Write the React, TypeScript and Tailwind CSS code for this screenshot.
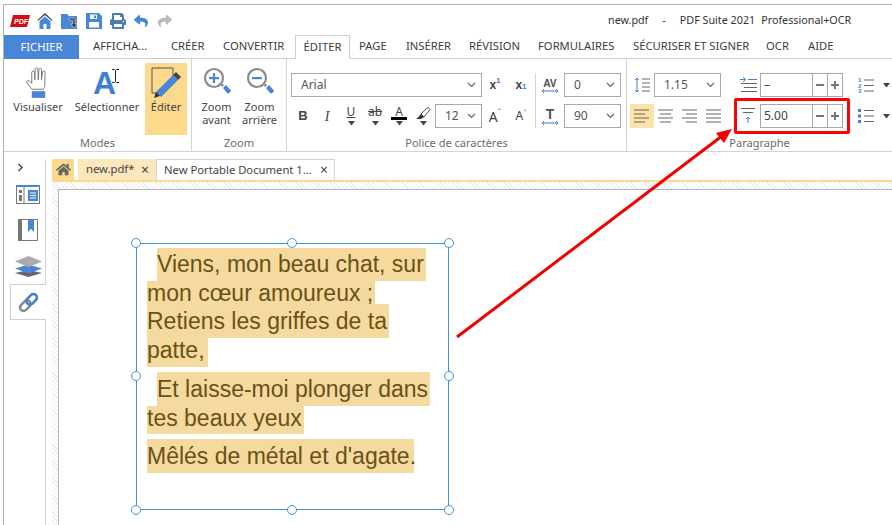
import React from 'react';
import { FaHome, FaPrint, FaReply, FaShare } from 'react-icons/fa';

const Chevron = () => (
  <svg width="9" height="6" viewBox="0 0 9 6" className="shrink-0">
    <path d="M1 1l3.5 3.5L8 1" fill="none" stroke="#666" strokeWidth="1.2" />
  </svg>
);

function Select({ value, className }: { value: string; className: string }) {
  return (
    <div className={`flex h-[24px] items-center justify-between border border-[#a9a9a9] bg-white pl-[9px] pr-[5px] text-[12px] text-[#555] ${className}`}>
      <span>{value}</span>
      <Chevron />
    </div>
  );
}

function Spinner({ value }: { value: string }) {
  return (
    <div className="flex h-[24px] w-[83px] items-center border border-[#a9a9a9] bg-white text-[12px] text-[#444]">
      <span className="flex-1 pl-[3px]">{value}</span>
      <span className="flex h-full w-[15px] items-center justify-center border-l border-[#a9a9a9]">
        <span className="h-[2px] w-[8px] bg-[#777]" />
      </span>
      <span className="relative flex h-full w-[15px] items-center justify-center border-l border-[#a9a9a9]">
        <span className="h-[2px] w-[8px] bg-[#777]" />
        <span className="absolute h-[8px] w-[2px] bg-[#777]" />
      </span>
    </div>
  );
}

const Lines = ({ kind }: { kind: 'left' | 'center' | 'right' | 'justify' }) => {
  const rows = [16, 10, 16, 10];
  return (
    <svg width="16" height="14" viewBox="0 0 16 14">
      {rows.map((w, i) => {
        const width = kind === 'justify' ? 15 : i % 2 ? w + 1 : 15;
        const x = kind === 'left' || kind === 'justify' ? 0 : kind === 'center' ? (15 - width) / 2 : 15 - width;
        return <rect key={i} x={x} y={i * 4 + 0.5} width={width} height="1" fill="#666" />;
      })}
    </svg>
  );
};

const Hand = () => (
  <svg width="24" height="34" viewBox="0 0 25 35">
    <path
      d="M6 24 1.2 17.5c-1.2-2 1-3.6 2.7-2L6 18V6.5c0-2 2.6-2 2.8 0L9.2 14 9.5 3.2c.1-2 2.8-2 2.9 0L12.8 14l.6-10.5c.2-2 2.8-1.8 2.8.2L16 14.500l1.300-8.500c.4-1.800 2.800-1.400 2.600.5L19.500 20c-.3 2-.8 3-1.500 4Z"
      fill="#fff"
      stroke="#777"
      strokeWidth="1"
    />
    <rect x="6" y="26" width="14" height="7" fill="#4a86d8" />
  </svg>
);

const ZoomIcon = ({ plus }: { plus?: boolean }) => (
  <svg width="28" height="30" viewBox="0 0 28 30">
    <circle cx="11" cy="11" r="9" fill="#fff" stroke="#8c8c8c" strokeWidth="2.2" />
    <rect x="6" y="10" width="10" height="2.200" fill="#4a86d8" />
    {plus && <rect x="9.900" y="6" width="2.200" height="10" fill="#4a86d8" />}
    <path d="M18 18l2-1 1 1-2 2Z" fill="#777" />
    <path d="M20 21l3-3 5 5.500c.3 1-2.500 3.500-3.500 3Z" fill="#4a86d8" />
  </svg>
);

const EditIcon = () => (
  <svg width="30" height="33" viewBox="0 0 30 33">
    <path d="M7 26H1V1h21v10" fill="none" stroke="#555" strokeWidth="1" />
    <path d="M6 27 23 10l5 5-17 17Z" fill="#4a86d8" transform="translate(-1 -2)" />
    <path d="M22 8l3-3 5 5-3 3Z" fill="#444" />
    <path d="M5 25l-2 6 6-2Z" fill="#333" />
  </svg>
);

const SmallArrow = () => (
  <svg width="7" height="5" viewBox="0 0 7 5">
    <path d="M0 0h7L3.500 4.500Z" fill="#444" />
  </svg>
);

const Tool = ({ children, className }: { children: React.ReactNode; className: string }) => (
  <div className={`flex h-[24px] shrink-0 items-center justify-center ${className}`}>{children}</div>
);

function Tabs() {
  const tabs = [
    ['AFFICHA...', 'w-[78px]'],
    ['CRÉER', 'w-[52px]'],
    ['CONVERTIR', 'w-[81px]'],
  ];
  const rest = [
    ['PAGE', 'w-[47px]'],
    ['INSÉRER', 'w-[63px]'],
    ['RÉVISION', 'w-[69px]'],
    ['FORMULAIRES', 'w-[95px]'],
    ['SÉCURISER ET SIGNER', 'w-[133px]'],
    ['OCR', 'w-[42px]'],
    ['AIDE', 'w-[50px]'],
  ];
  return (
    <div className="flex h-[24px] items-stretch border-b border-[#cfcfcf] text-[11.25px] text-[#3c3c3c]">
      <div className="mb-[-1px] flex w-[75px] items-center justify-center bg-[#4a86d8] text-white">FICHIER</div>
      <div className="w-[5px]" />
      {tabs.map(([t, w]) => (
        <div key={t} className={`flex items-center whitespace-nowrap pl-[9px] ${w}`}>{t}</div>
      ))}
      <div className="mb-[-1px] flex w-[55px] items-center justify-center border border-b-0 border-[#cfcfcf] bg-white">ÉDITER</div>
      {rest.map(([t, w]) => (
        <div key={t} className={`flex items-center whitespace-nowrap pl-[9px] ${w}`}>{t}</div>
      ))}
    </div>
  );
}

const GroupLabel = ({ children }: { children: React.ReactNode }) => (
  <div className="text-center text-[11px] leading-[16px] text-[#6b6b6b]">{children}</div>
);

function Modes() {
  return (
    <div className="flex w-[188px] shrink-0 flex-col border-r border-[#d4d4d4]">
      <div className="flex h-[77px] pl-[3px] pt-[4px] text-[11px] leading-[13px] text-[#444]">
        <div className="flex w-[62px] flex-col items-center pt-[3px]">
          <Hand />
          <span>Visualiser</span>
        </div>
        <div className="flex w-[76px] flex-col items-center pt-[3px]">
          <div className="relative flex h-[34px] w-[50px] items-center">
            <span className="pl-[11px] font-['Liberation_Sans'] text-[32px] font-bold leading-none text-[#3f7fd4]">A</span>
            <svg width="7" height="14" viewBox="0 0 7 14" className="absolute left-[30px] top-[3px]">
              <path d="M0 .5h2.500L3.500 1.500 4.500.5H7M3.500 1.500v11M0 13.500h2.500l1-1 1 1H7" fill="none" stroke="#222" />
            </svg>
          </div>
          <span>Sélectionner</span>
        </div>
        <div className="flex h-[72px] w-[42px] flex-col items-center bg-[#fdd98c] pt-[3px]">
          <div className="flex h-[34px] items-center"><EditIcon /></div>
          <span>Éditer</span>
        </div>
      </div>
      <GroupLabel>Modes</GroupLabel>
    </div>
  );
}

function ZoomGroup() {
  return (
    <div className="flex w-[95px] shrink-0 flex-col border-r border-[#d4d4d4]">
      <div className="flex h-[77px] pl-[3px] pt-[8px] text-center text-[11px] leading-[13px] text-[#444]">
        <div className="flex w-[43px] flex-col items-center">
          <ZoomIcon plus />
          <span className="mt-[3px]">Zoom</span>
          <span>avant</span>
        </div>
        <div className="flex w-[43px] flex-col items-center">
          <ZoomIcon />
          <span className="mt-[3px]">Zoom</span>
          <span>arrière</span>
        </div>
      </div>
      <GroupLabel>Zoom</GroupLabel>
    </div>
  );
}

function FontGroup() {
  return (
    <div className="flex w-[340px] shrink-0 flex-col border-r border-[#d4d4d4]">
      <div className="flex h-[77px] pl-[4px] pt-[14px]">
        <div className="flex h-[55px] w-[245px] flex-col gap-[7px] border-r border-[#d4d4d4] text-[#444]">
          <div className="flex">
            <Select value="Arial" className="w-[191px]" />
            <Tool className="w-[26px] font-['Liberation_Sans'] text-[12px] font-bold">x<sup className="text-[8px] text-[#3f7fd4]">1</sup></Tool>
            <Tool className="w-[26px] font-['Liberation_Sans'] text-[12px] font-bold">x<sub className="text-[8px] text-[#3f7fd4]">1</sub></Tool>
          </div>
          <div className="flex">
            <Tool className="w-[24px] font-['Liberation_Sans'] text-[13px] font-bold">B</Tool>
            <Tool className="w-[24px] font-['Liberation_Serif'] text-[14px] italic">I</Tool>
            <Tool className="w-[24px] flex-col">
              <span className="text-[12px] leading-[12px] underline">U</span>
              <span className="mt-[3px] flex"><SmallArrow /></span>
            </Tool>
            <Tool className="w-[24px] flex-col">
              <span className="text-[12px] leading-[12px] line-through">ab</span>
              <span className="mt-[3px] flex"><SmallArrow /></span>
            </Tool>
            <Tool className="w-[24px] flex-col">
              <span className="text-[12px] leading-[11px]">A</span>
              <span className="h-[3px] w-[16px] bg-black" />
              <span className="mt-[1px] flex"><SmallArrow /></span>
            </Tool>
            <Tool className="w-[24px] flex-col">
              <svg width="16" height="13" viewBox="0 0 16 13">
                <path d="M6 7l6-6c1-1 3 0 3 1.500L9 10Z" fill="#fff" stroke="#555" />
                <path d="M6 7l3 3-3 2-5 0c2-1 3-3 5-5Z" fill="#333" />
              </svg>
              <span className="mt-[1px] flex"><SmallArrow /></span>
            </Tool>
            <Select value="12" className="w-[47px]" />
            <Tool className="w-[26px] text-[14px]">A<span className="mb-[6px] text-[8px] text-[#3f7fd4]">ˆ</span></Tool>
            <Tool className="w-[26px] text-[12px]">A<span className="mb-[4px] text-[8px] text-[#3f7fd4]">ˇ</span></Tool>
          </div>
        </div>
        <div className="flex flex-col gap-[7px]">
          <div className="flex">
            <Tool className="w-[28px] flex-col text-[10px] font-bold leading-[11px] text-[#555]">
              AV
              <svg width="16" height="4" viewBox="0 0 16 4"><path d="M0 2h16M2 0 0 2l2 2M14 0l2 2-2 2" stroke="#3f7fd4" fill="none" /></svg>
            </Tool>
            <Select value="0" className="w-[57px]" />
          </div>
          <div className="flex">
            <Tool className="w-[28px] flex-col font-['Liberation_Sans'] text-[14px] font-bold leading-[14px] text-[#555]">
              T
              <svg width="16" height="4" viewBox="0 0 16 4"><path d="M0 2h16M2 0 0 2l2 2M14 0l2 2-2 2" stroke="#3f7fd4" fill="none" /></svg>
            </Tool>
            <Select value="90" className="w-[57px]" />
          </div>
        </div>
      </div>
      <GroupLabel>Police de caractères</GroupLabel>
    </div>
  );
}

function ParagraphGroup() {
  return (
    <div className="flex flex-1 flex-col">
      <div className="flex h-[77px] flex-col gap-[7px] pl-[3px] pt-[14px]">
        <div className="flex items-center">
          <Tool className="w-[24px]">
            <svg width="16" height="16" viewBox="0 0 16 16">
              <path d="M3 1v14M1 3l2-2 2 2M1 13l2 2 2-2" stroke="#3f7fd4" fill="none" />
              <path d="M8 2h8M8 6h8M8 10h8M8 14h8" stroke="#666" />
            </svg>
          </Tool>
          <Select value="1.15" className="w-[67px]" />
          <Tool className="ml-[15px] w-[24px] justify-start pl-[4px]">
            <svg width="17" height="18" viewBox="0 0 17 18">
              <path d="M0 3.500h5M3 1l2.500 2.500L3 6" stroke="#3f7fd4" fill="none" />
              <path d="M8 3.500h9" stroke="#3f7fd4" />
              <path d="M1 7.500h16M4 11.500h13M1 15.500h16" stroke="#666" />
            </svg>
          </Tool>
          <Spinner value="–" />
          <Tool className="ml-[15px] w-[16px]">
            <svg width="16" height="16" viewBox="0 0 16 16">
              <text x="0" y="5" fontSize="6" fontWeight="700" fill="#3f7fd4" fontFamily="Liberation Sans">1</text>
              <text x="0" y="10.500" fontSize="6" fontWeight="700" fill="#3f7fd4" fontFamily="Liberation Sans">2</text>
              <text x="0" y="16" fontSize="6" fontWeight="700" fill="#3f7fd4" fontFamily="Liberation Sans">3</text>
              <path d="M6 3h10M6 8.500h10M6 14h10" stroke="#666" />
            </svg>
          </Tool>
          <span className="ml-[9px] flex"><SmallArrow /></span>
        </div>
        <div className="flex items-center">
          <Tool className="w-[24px] bg-[#fde3a7]"><Lines kind="left" /></Tool>
          <Tool className="w-[24px]"><Lines kind="center" /></Tool>
          <Tool className="w-[24px]"><Lines kind="right" /></Tool>
          <Tool className="w-[24px]"><Lines kind="justify" /></Tool>
          <Tool className="ml-[10px] w-[24px] justify-start pl-[5px]">
            <svg width="14" height="16" viewBox="0 0 14 16">
              <path d="M0 .5h14M2 4.500h10" stroke="#666" />
              <path d="M7 15V9M5 11l2-2 2 2" stroke="#3f7fd4" fill="none" />
            </svg>
          </Tool>
          <div className="relative">
            <Spinner value="5.00" />
            <div className="absolute -bottom-[6px] -left-[26px] -right-[7px] -top-[6px] rounded-[2px] border-[3px] border-[#ff0000]" />
          </div>
          <Tool className="ml-[15px] w-[16px]">
            <svg width="16" height="14" viewBox="0 0 16 14">
              <path d="M0 0h3v3H0zM0 5.500h3v3H0zM0 11h3v3H0z" fill="#3f7fd4" />
              <path d="M6 1.500h10M6 7h10M6 12.500h10" stroke="#666" />
            </svg>
          </Tool>
          <span className="ml-[9px] flex"><SmallArrow /></span>
        </div>
      </div>
      <GroupLabel>Paragraphe</GroupLabel>
    </div>
  );
}

const PanelIcon = () => (
  <svg width="24" height="19" viewBox="0 0 24 19">
    <rect x=".5" y="1" width="23" height="17.500" fill="#fff" stroke="#777" />
    <rect x="0" y="0" width="24" height="2" fill="#4a86d8" />
    <path d="M8 2v16" stroke="#777" />
    <rect x="3" y="5" width="3" height="3" fill="#777" />
    <rect x="3" y="10" width="3" height="6" fill="#777" />
    <rect x="12" y="5" width="10" height="11" fill="#4a86d8" />
    <path d="M14 8h6M14 10.500h6M14 13h6" stroke="#fff" />
  </svg>
);

const BookmarkIcon = () => (
  <svg width="20" height="22" viewBox="0 0 20 22">
    <rect x="0" y="0" width="4" height="22" fill="#777" />
    <path d="M4 .5h15.500v21H4" fill="none" stroke="#777" />
    <path d="M10 1h6v12l-3-3-3 3Z" fill="#4a86d8" />
  </svg>
);

const LayersIcon = () => (
  <svg width="27" height="21" viewBox="0 0 27 21">
    <path d="M13.500 14 27 17l-13.500 4L0 17Z" fill="#666" />
    <path d="M13.500 7 27 11.500 13.500 17 0 11.500Z" fill="#fff" />
    <path d="M13.500 8.500 27 12.500 13.500 17.500 0 12.500Z" fill="#4a86d8" />
    <path d="M13.500 0 27 5.500 13.500 11 0 5.500Z" fill="#aaa" />
  </svg>
);

const LinkIcon = () => (
  <svg width="21" height="21" viewBox="0 0 21 21">
    <g transform="rotate(-45 10.500 10.500)" fill="none" strokeWidth="2.600">
      <rect x="0" y="7" width="12" height="7" rx="3.500" stroke="#8c8c8c" />
      <rect x="9" y="7" width="12" height="7" rx="3.500" stroke="#3f7fd4" />
    </g>
  </svg>
);

function Sidebar() {
  return (
    <div className="w-[42px] shrink-0 pt-[7px]">
      <div className="flex h-[500px] flex-col border-r border-[#d4d4d4]">
        <div className="flex h-[16px] items-center pl-[13px]">
          <svg width="7" height="9" viewBox="0 0 7 9"><path d="M1.500 1l3.500 3.500L1.500 8" fill="none" stroke="#555" strokeWidth="1.600" /></svg>
        </div>
        <div className="mt-[9px] flex h-[20px] items-center pl-[12px]"><PanelIcon /></div>
        <div className="mt-[14px] flex h-[23px] items-center pl-[14px]"><BookmarkIcon /></div>
        <div className="mt-[14px] flex h-[22px] items-center pl-[11px]"><LayersIcon /></div>
        <div className="mr-[-1px] ml-[6px] mt-[7px] flex h-[36px] items-center border border-r-0 border-[#cfcfcf] bg-white pl-[7px]"><LinkIcon /></div>
      </div>
    </div>
  );
}

const Handle = ({ className }: { className: string }) => (
  <span className={`absolute h-[10px] w-[10px] rounded-full border border-[#3f94d8] bg-white ${className}`} />
);

const lines = [
  ['Viens, mon beau chat, sur', 'h-[33px] leading-[33px] ml-[10px] w-[269px]'],
  ['mon cœur amoureux ;', 'h-[23px] leading-[25px] w-[228px]'],
  ['Retiens les griffes de ta', 'h-[34px] leading-[34px] w-[242px]'],
  ['patte,', 'h-[29px] leading-[24px] w-[61px]'],
  ['Et laisse-moi plonger dans', 'h-[34px] mt-[5px] leading-[34px] ml-[10px] w-[273px]'],
  ['tes beaux yeux', 'h-[28px] leading-[24px] w-[157px]'],
  ["Mêlés de métal et d'agate.", 'h-[34px] mt-[5px] leading-[34px] w-[267px]'],
];

function TextBox() {
  return (
    <div className="relative ml-[77px] mt-[53px] h-[267px] w-[313px] border border-[#3f94d8] pl-[10px] pt-[4px]">
      <Handle className="-left-[6px] -top-[6px]" />
      <Handle className="-top-[6px] left-[150px]" />
      <Handle className="-right-[6px] -top-[6px]" />
      <Handle className="-left-[6px] top-[127px]" />
      <Handle className="-right-[6px] top-[127px]" />
      <Handle className="-bottom-[6px] -left-[6px]" />
      <Handle className="-bottom-[6px] left-[150px]" />
      <Handle className="-bottom-[6px] -right-[6px]" />
      <div className="flex flex-col font-['Liberation_Sans'] text-[23px] text-[#6a5118]">
        {lines.map(([t, c]) => (
          <div key={t} className={`whitespace-pre bg-[#f4da9e] ${c}`}>{t}</div>
        ))}
      </div>
    </div>
  );
}

export default function App() {
  return (
    <div className="relative h-[525px] w-[892px] overflow-hidden bg-white font-['Noto_Sans',sans-serif]">
      <div className="ml-[3px] mt-[4px] h-[521px] border-l border-t border-[#b5b5b5]">
        {/* title bar */}
        <div className="flex h-[30px] items-center pl-[6px] pt-[1px]">
          <svg width="20" height="12" viewBox="0 0 20 12" className="mr-[7px]">
            <path d="M3 0h17l-3 12H0Z" fill="#d40b12" />
            <text x="4" y="9" fontSize="7" fontWeight="700" fontStyle="italic" fill="#fff" fontFamily="Liberation Sans">PDF</text>
          </svg>
          <svg width="16" height="16" viewBox="0 0 16 16" className="mr-[8px]">
            <path d="M8 0 0 7.500h1.500L8 2l6.500 5.500H16Z" fill="#444" />
            <path d="M8 3.500 2.500 8v8h4v-5h3v5h4V8Z" fill="#4a86d8" />
          </svg>
          <svg width="17" height="16" viewBox="0 0 17 16" className="mr-[8px]">
            <path d="M0 1h6l2 2h8v13H0Z" fill="#4a86d8" />
            <path d="M8 5h3c2 0 3 1 3 3v3h2l-3 4-3-4h2V8c0-1-.5-1-1.500-1H8Z" fill="#333" stroke="#fff" strokeWidth=".5" />
          </svg>
          <svg width="16" height="16" viewBox="0 0 16 16" className="mr-[8px]">
            <path d="M0 0h13l3 3v13H0Z" fill="#4a86d8" />
            <rect x="4" y="1.500" width="7" height="4.500" fill="#fff" />
            <rect x="8" y="2.500" width="2" height="2.500" fill="#4a86d8" />
            <rect x="3" y="9" width="10" height="5.500" fill="#fff" />
          </svg>
          <FaPrint className="mr-[8px] text-[16px] text-[#4a7faf]" />
          <FaReply className="mr-[10px] text-[14px] text-[#4a86d8]" />
          <FaShare className="text-[14px] text-[#b8b8b8]" />
          <div className="ml-[436px] flex text-[10.75px] text-[#333]">
            <span>new.pdf</span>
            <span className="ml-[14px]">-</span>
            <span className="ml-[14px]">PDF Suite 2021</span>
            <span className="ml-[6px]">Professional+OCR</span>
          </div>
        </div>
        <Tabs />
        {/* ribbon */}
        <div className="flex h-[93px] border-b border-[#d4d4d4]">
          <Modes />
          <ZoomGroup />
          <FontGroup />
          <ParagraphGroup />
        </div>
        <div className="flex">
          <Sidebar />
          <div className="ml-[6px] flex-1 pt-[7px]">
            <div className="flex h-[23px] items-stretch border-b-2 border-[#fdd98c] text-[11.25px] text-[#444]">
              <div className="flex w-[22px] items-center justify-center bg-[#fdd98c]"><FaHome className="text-[15px] text-[#666]" /></div>
              <div className="ml-[4px] flex w-[78px] items-center justify-between bg-[#fde8bd] pl-[8px] pr-[7px]">
                <span>new.pdf*</span>
                <span className="text-[14px] leading-none">×</span>
              </div>
              <div className="flex w-[179px] items-center justify-between border border-b-0 border-[#d4d4d4] bg-white pl-[7px] pr-[6px]">
                <span className="whitespace-nowrap">New Portable Document 1...</span>
                <span className="text-[14px] leading-none">×</span>
              </div>
            </div>
            <div className="bg-[repeating-linear-gradient(45deg,#ececec_0,#ececec_1px,#fff_1px,#fff_3px)] pl-[6px] pt-[7px]">
              <div className="h-[340px] border-l border-t border-[#b5b5b5] bg-white">
                <TextBox />
              </div>
            </div>
          </div>
        </div>
      </div>
      <svg width="892" height="525" viewBox="0 0 892 525" className="pointer-events-none absolute left-0 top-0">
        <path d="M457 337 722 136" stroke="#f00000" strokeWidth="3" />
        <path d="M732 129 716 133 724 143Z" fill="#f00000" />
      </svg>
    </div>
  );
}
